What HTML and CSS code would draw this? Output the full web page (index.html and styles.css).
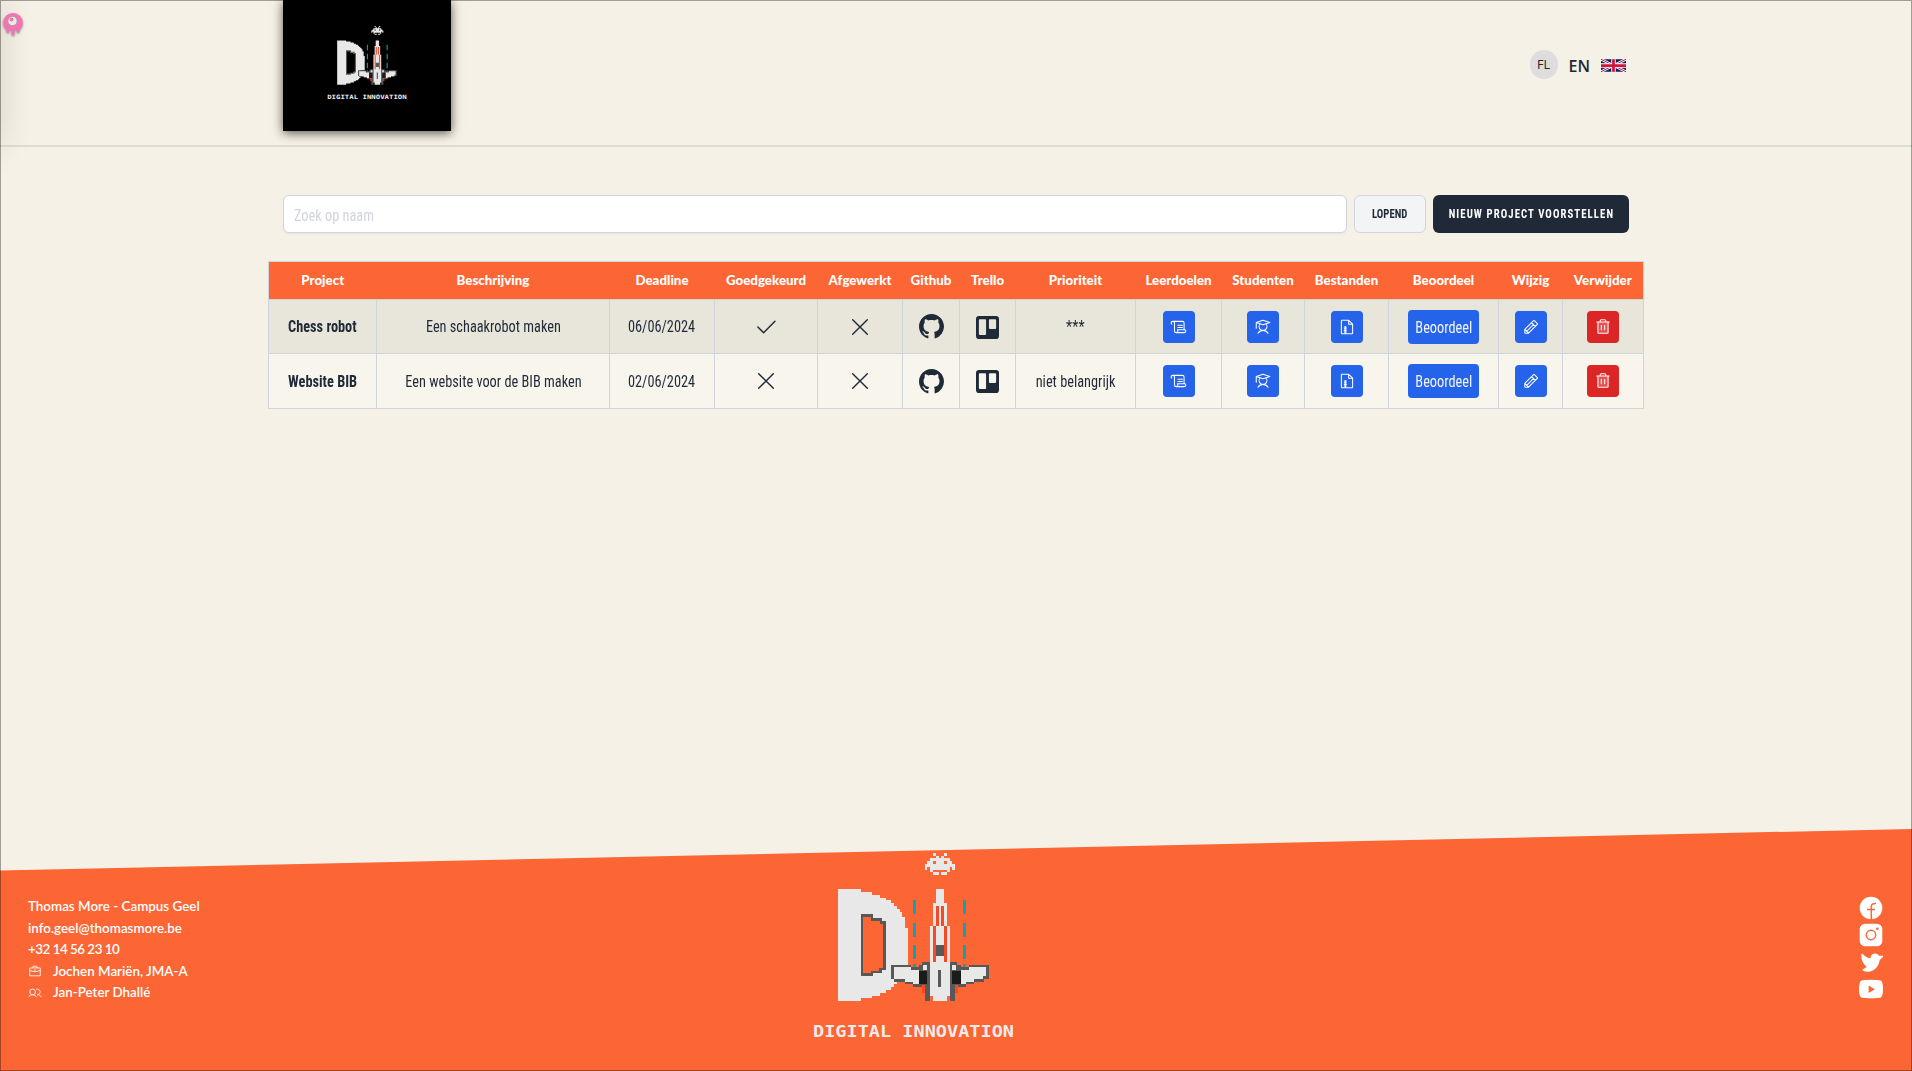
FILE: index.html
```html
<!DOCTYPE html>
<html lang="nl">
<head>
<meta charset="utf-8">
<title>Projecten</title>
<link rel="stylesheet" href="styles.css">
</head>
<body>
<svg class="defs" aria-hidden="true">
  <symbol id="logo" viewBox="0 0 810 690">
    <g>
      <path fill="#e8e8e8" fill-rule="evenodd" d="M175 178H243V186H276V194H301V203H317V211H334V219H342V228H351V236H359V245H367V262H376V295H384V404H351V463H342V472H334V480H317V488H301V497H276V505H243V513H175ZM246 258V433H276V425H300V417H310V404H314V279H300V271H276V258Z"/>
      <path fill="none" stroke="#585858" stroke-width="8" d="M246 257V433H276V426H302V417H313V277H303V268H276V257Z"/>
      <path fill="none" stroke="#0aa5b5" stroke-width="8" d="M404 211V253M404 279V321M404 346V388M404 403V412M554 211V253M554 279V321M554 346V388M554 403V412"/>
      <path fill="#585858" d="M333 404H393V412H417V404H427V396H450V513H434V472H400V463H376V455H342V447H333ZM626 404H566V412H542V404H532V396H509V513H525V472H558V463H583V455H611V447H626Z"/>
      <path fill="#e8e8e8" d="M342 412H392V420H430V404H442V420H417V463H400V455H376V447H342ZM617 412H567V420H529V404H517V420H542V463H558V455H583V447H609V438H617Z"/>
      <path fill="#1b1b1b" d="M417 422H442V463H417ZM517 422H542V463H517Z"/>
      <path fill="#ff4820" d="M426 464H434V488H426ZM525 464H533V488H525Z"/>
      <path fill="#e8e8e8" d="M467 178H492V219H501V287H509V497H501V513H459V497H450V287H459V219H467Z"/>
      <path fill="#f64a24" d="M467 228H476V287H467V396H459V287H467ZM484 228H492V287H501V396H492V287H484Z"/>
      <path fill="#585858" d="M467 346H492V379H467ZM475 421H484V471H475Z"/>
      <path fill="#e8e8e8" fill-rule="evenodd" d="M459 69H467V77H476V85H484V77H492V69H501V77H492V85H509V94H517V102H525V119H517V111H509V127H501V119H459V127H450V111H442V119H434V102H442V94H450V85H467V77H459ZM459 94V102H467V94ZM492 94V102H501V94ZM459 127H476V135H459ZM484 127H501V135H484Z"/>
    </g>
    <text class="logo-text" x="99" y="620" textLength="603" lengthAdjust="spacingAndGlyphs">DIGITAL INNOVATION</text>
  </symbol>
  <symbol id="check" viewBox="0 0 256 256"><path d="M216 72 104 184 48 128"/></symbol>
  <symbol id="x" viewBox="0 0 256 256"><path d="M200 56 56 200M200 200 56 56"/></symbol>
  <symbol id="github" viewBox="0 0 16 16"><path d="M8 0C3.58 0 0 3.58 0 8c0 3.54 2.29 6.53 5.47 7.59.4.07.55-.17.55-.38 0-.19-.01-.82-.01-1.49-2.01.37-2.53-.49-2.69-.94-.09-.23-.48-.94-.82-1.13-.28-.15-.68-.52-.01-.53.63-.01 1.08.58 1.23.82.72 1.21 1.87.87 2.33.66.07-.52.28-.87.51-1.07-1.78-.2-3.64-.89-3.64-3.95 0-.87.31-1.59.82-2.15-.08-.2-.36-1.02.08-2.12 0 0 .67-.21 2.2.82.64-.18 1.32-.27 2-.27s1.36.09 2 .27c1.53-1.04 2.2-.82 2.2-.82.44 1.1.16 1.92.08 2.12.51.56.82 1.27.82 2.15 0 3.07-1.87 3.75-3.65 3.95.29.25.54.73.54 1.48 0 1.07-.01 1.93-.01 2.2 0 .21.15.46.55.38A8.01 8.01 0 0 0 16 8c0-4.42-3.58-8-8-8Z"/></symbol>
  <symbol id="trello" viewBox="0 0 24 24"><path fill-rule="evenodd" d="M3.2 0H20.8A3.2 3.2 0 0 1 24 3.2V20.8A3.2 3.2 0 0 1 20.8 24H3.2A3.2 3.2 0 0 1 0 20.8V3.2A3.2 3.2 0 0 1 3.2 0ZM4 3.4A1 1 0 0 0 3 4.4V18.7A1 1 0 0 0 4 19.7H9.5A1 1 0 0 0 10.500 18.700V4.400A1 1 0 0 0 9.500 3.400ZM14.500 3.400A1 1 0 0 0 13.500 4.400V12.500A1 1 0 0 0 14.500 13.500H20A1 1 0 0 0 21 12.500V4.400A1 1 0 0 0 20 3.400Z"/></symbol>
  <symbol id="scroll" viewBox="0 0 256 256"><path d="M112 104h64M112 136h64M24 88S16 82 16 72a24 24 0 0 1 48 0v112a24 24 0 0 0 24 24h112a24 24 0 0 0 24-24c0-10-8-16-8-16H104s8 6 8 16a24 24 0 0 1-24 24M40 48h136a24 24 0 0 1 24 24v96"/></symbol>
  <symbol id="student" viewBox="0 0 256 256"><path d="M32 64v80M128 32 224 64 128 96 32 64ZM169 82a56 56 0 1 1-82 0M56 216c16-24 41-40 72-40s56 16 72 40"/></symbol>
  <symbol id="zip" viewBox="0 0 256 256"><path d="M200 224H56a8 8 0 0 1-8-8V40a8 8 0 0 1 8-8h96l56 56v128a8 8 0 0 1-8 8ZM152 32v56h56M104 120v104M90 128h28M90 152h28M90 176h28M90 200h28"/></symbol>
  <symbol id="pencil" viewBox="0 0 256 256"><path d="M93 216H48a8 8 0 0 1-8-8v-45L165 38a8 8 0 0 1 11 0l42 42a8 8 0 0 1 0 11ZM136 67l53 53M165 92 68 189M40 163l53 53"/></symbol>
  <symbol id="trash" viewBox="0 0 256 256"><path fill="#fff" fill-opacity=".2" stroke="none" d="M56 56h144v160H56Z"/><path d="M216 56H40M104 104v64M152 104v64M200 56v152a8 8 0 0 1-8 8H64a8 8 0 0 1-8-8V56M168 56V40a16 16 0 0 0-16-16h-48a16 16 0 0 0-16 16v16"/></symbol>
  <symbol id="case" viewBox="0 0 256 256"><path d="M32 72h192v144H32ZM168 72V56a16 16 0 0 0-16-16h-48a16 16 0 0 0-16 16v16M224 118q-96 50-192 0M112 112h32"/></symbol>
  <symbol id="users" viewBox="0 0 256 256"><circle cx="84" cy="108" r="52"/><path d="M10 200a88 88 0 0 1 148 0M150 60a52 52 0 1 1 22 100c31 0 56 15 74 40"/></symbol>
</svg>

<div class="debug-tab">
  <svg class="debug-icon" viewBox="0 0 20 23"><g fill="#f472b6"><path d="M10 0a9.800 9.800 0 0 1 9.800 9.800c0 3-1.300 5.200-3 6.700h-13.600c-1.700-1.500-3-3.700-3-6.700A9.800 9.800 0 0 1 10 0Z"/><rect x="3.500" y="13" width="2.800" height="6.800" rx="1.400"/><rect x="8.500" y="13" width="3" height="9.500" rx="1.500"/><rect x="13.700" y="13" width="2.800" height="6.800" rx="1.400"/></g><circle cx="9.500" cy="8" r="4.700" fill="#eee9de" stroke="#ad9a94"/><circle cx="8.500" cy="6.500" r="2" fill="#f472b6"/></svg>
</div>

<header class="header">
  <div class="brand"><svg class="brand-logo"><use href="#logo"/></svg></div>
  <nav class="user-nav">
    <span class="avatar">FL</span>
    <span class="lang">EN</span>
    <svg class="flag" viewBox="0 0 50 25"><path fill="#012169" d="M0 0h50v25H0z"/><path stroke="#fff" stroke-width="5" d="m0 0 50 25M50 0 0 25"/><path stroke="#d0143a" stroke-width="2" d="m0 0 50 25M50 0 0 25"/><path stroke="#fff" stroke-width="9" d="M25 0v25M0 12.500h50"/><path stroke="#d0143a" stroke-width="5.500" d="M25 0v25M0 12.500h50"/></svg>
  </nav>
</header>

<main class="main">
  <div class="toolbar">
    <div class="search"><span class="cond">Zoek op naam</span></div>
    <div class="btn-light"><span class="cond">LOPEND</span></div>
    <div class="btn-dark"><span class="cond">NIEUW PROJECT VOORSTELLEN</span></div>
  </div>
  <table class="projects">
    <colgroup><col class="c108"><col class="c233"><col class="c105"><col class="c103"><col class="c85"><col class="c57"><col class="c56"><col class="c120"><col class="c86"><col class="c83"><col class="c84"><col class="c110"><col class="c64"><col class="c81"></colgroup>
    <thead><tr><th>Project</th><th>Beschrijving</th><th>Deadline</th><th>Goedgekeurd</th><th>Afgewerkt</th><th>Github</th><th>Trello</th><th>Prioriteit</th><th>Leerdoelen</th><th>Studenten</th><th>Bestanden</th><th>Beoordeel</th><th>Wijzig</th><th>Verwijder</th></tr></thead>
    <tbody>
      <tr>
        <td><b class="cond">Chess robot</b></td><td><span class="cond">Een schaakrobot maken</span></td><td><span class="cond">06/06/2024</span></td>
        <td><svg class="mark"><use href="#check"/></svg></td><td><svg class="mark"><use href="#x"/></svg></td>
        <td><svg class="github"><use href="#github"/></svg></td><td><svg class="trello"><use href="#trello"/></svg></td>
        <td><span class="cond">***</span></td>
        <td><span class="action"><svg><use href="#scroll"/></svg></span></td><td><span class="action"><svg><use href="#student"/></svg></span></td><td><span class="action"><svg><use href="#zip"/></svg></span></td>
        <td><span class="rate"><span class="cond">Beoordeel</span></span></td>
        <td><span class="action"><svg><use href="#pencil"/></svg></span></td><td><span class="action danger"><svg><use href="#trash"/></svg></span></td>
      </tr>
      <tr>
        <td><b class="cond">Website BIB</b></td><td><span class="cond">Een website voor de BIB maken</span></td><td><span class="cond">02/06/2024</span></td>
        <td><svg class="mark"><use href="#x"/></svg></td><td><svg class="mark"><use href="#x"/></svg></td>
        <td><svg class="github"><use href="#github"/></svg></td><td><svg class="trello"><use href="#trello"/></svg></td>
        <td><span class="cond">niet belangrijk</span></td>
        <td><span class="action"><svg><use href="#scroll"/></svg></span></td><td><span class="action"><svg><use href="#student"/></svg></span></td><td><span class="action"><svg><use href="#zip"/></svg></span></td>
        <td><span class="rate"><span class="cond">Beoordeel</span></span></td>
        <td><span class="action"><svg><use href="#pencil"/></svg></span></td><td><span class="action danger"><svg><use href="#trash"/></svg></span></td>
      </tr>
    </tbody>
  </table>
</main>

<footer class="footer">
  <address class="contact">
    <p>Thomas More - Campus Geel</p>
    <p>info.geel@thomasmore.be</p>
    <p class="phone">+32 14 56 23 10</p>
    <p><svg><use href="#case"/></svg>Jochen Mariën, JMA-A</p>
    <p><svg><use href="#users"/></svg>Jan-Peter Dhallé</p>
  </address>
  <svg class="footer-logo"><use href="#logo"/></svg>
  <div class="social">
    <svg viewBox="0 0 24 24"><circle cx="12" cy="12" r="11.300" fill="#fff"/><path fill="none" stroke="#fc6534" stroke-width="1.500" d="M12.300 24V10.500q0-3.300 4.700-3M8 13.500h8"/></svg>
    <svg viewBox="0 0 24 24"><rect x=".7" y=".7" width="22.600" height="22.600" rx="5.500" fill="#fff"/><circle cx="12" cy="12" r="4.700" fill="none" stroke="#fc6534" stroke-width="1.500"/><circle cx="18.300" cy="5.700" r="1.300" fill="#fc6534"/></svg>
    <svg viewBox="0 0 256 256"><path fill="#fff" d="M250 78 220 108c-6 69-65 124-134 124-15 0-27-2-36-7-8-4-11-8-12-9a8 8 0 0 1 4-12c1 0 24-9 39-26-10-7-18-15-26-25C38 131 20 91 26 47a8 8 0 0 1 13-5c1 1 38 38 84 49v-7a48 48 0 0 1 48-48c17 0 32 9 41 24h32a8 8 0 0 1 6 18Z"/></svg>
    <svg viewBox="0 0 24 24"><path fill="#fff" d="M12 2.700q7 0 9.700.8Q24 5 24 12t-2.300 8.500q-2.700.8-9.700.8t-9.700-.8Q0 19 0 12t2.300-8.500Q5 2.700 12 2.700Z"/><path fill="#fc6534" d="m9.600 8.500 6.300 3.700-6.300 3.700z"/></svg>
  </div>
</footer>
<div class="frame"></div>
</body>
</html>
```
FILE: styles.css
```css
* { box-sizing: border-box; }
body {
  margin: 0;
  height: 1071px;
  display: flex;
  flex-direction: column;
  overflow: hidden;
  background: #f6f1e6;
  color: #1f2937;
  font: 16px/24px "Roboto Condensed", Roboto, sans-serif;
}
.defs { position: absolute; width: 0; height: 0; }
.frame { position: absolute; inset: 0; border: 1px solid rgba(0, 0, 0, .35); pointer-events: none; }
.logo-text { font: bold 45px "DejaVu Sans Mono", monospace; fill: #f1ece9; }

.debug-tab { position: absolute; left: -30px; top: 0; width: 30px; height: 145px; box-shadow: 0 0 36px rgba(0, 0, 0, .14); }
.debug-icon { position: absolute; left: 33px; top: 13px; width: 20px; height: 23px; filter: drop-shadow(0 1px 1px rgba(0, 0, 0, .4)); }

.header { height: 147px; flex: none; padding: 0 284px 0 283px; display: flex; justify-content: space-between; align-items: flex-start; border-bottom: 2px solid #deddd1; }
.brand { width: 168px; height: 131px; padding: 17px 0 0 31px; background: #000; box-shadow: 0 2px 10px rgba(0, 0, 0, .65); }
.brand-logo { display: block; width: 107px; height: 91px; }
.user-nav { display: flex; align-items: center; padding-top: 50px; padding-right: 2px; }
.avatar { width: 28px; height: 29px; border-radius: 14px; background: #ddd; color: #222; text-align: center; font: 12.500px/29px "Open Sans", sans-serif; }
.lang { margin: 2px 11px 0 11px; font: 600 16px/24px "Open Sans", sans-serif; }
.flag { width: 25px; height: 13px; margin-top: 1px; }

.main { flex: 1; padding: 48px 268px 0; }
.toolbar { height: 38px; padding: 0 15px; display: flex; gap: 7px; }
.cond { display: inline-block; white-space: nowrap; transform: scaleX(.895); }
.search { flex: 1; border: 1px solid #d1d5db; border-radius: 6px; background: #fff; color: #d1d5db; padding: 8px 10px 6px; box-shadow: 0 1px 2px rgba(0, 0, 0, .06); }
.search .cond { transform-origin: left; }
.btn-light, .btn-dark { display: flex; align-items: center; justify-content: center; border-radius: 6px; font-size: 12px; font-weight: 700; }
.btn-light { width: 72px; background: #f3f4f6; border: 1px solid #d1d5db; }
.btn-dark { width: 196px; background: #1f2937; color: #fff; letter-spacing: 1.200px; }

.projects { width: 1376px; margin-top: 28px; table-layout: fixed; border-collapse: collapse; border: 1px solid #d1d5db; text-align: center; }
.c108 { width: 108px; } .c233 { width: 233px; } .c105 { width: 105px; } .c103 { width: 103px; }
.c85 { width: 85px; } .c57 { width: 57px; } .c56 { width: 56px; } .c120 { width: 120px; }
.c86 { width: 86px; } .c83 { width: 83px; } .c84 { width: 84px; } .c110 { width: 110px; }
.c64 { width: 64px; } .c81 { width: 81px; }
th { height: 38px; padding: 0 0 1px; background: #fc6534; color: #fff; font: 900 13.300px/20px Lato, sans-serif; white-space: nowrap; }
td { height: 55px; padding: 0; border: 1px solid #d1d5db; white-space: nowrap; }
tbody tr { background: #f8f5ed; }
tbody tr:first-child { background: #e8e6da; }
tbody tr:first-child td { height: 54px; }
td > .cond { padding-top: 1px; }
td svg { vertical-align: middle; }
.mark { width: 26px; height: 26px; fill: none; stroke: #1f2937; stroke-width: 14; stroke-linecap: round; stroke-linejoin: round; }
.github { width: 25px; height: 25px; fill: #1f2937; }
.trello { width: 23px; height: 23px; fill: #1f2937; }
.action { display: inline-flex; align-items: center; justify-content: center; width: 32px; height: 32px; border-radius: 4px; background: #2563eb; vertical-align: middle; }
.danger { background: #dc2626; }
.action svg { width: 18px; height: 18px; fill: none; stroke: #fff; stroke-width: 15; stroke-linecap: round; stroke-linejoin: round; }
.rate { display: inline-flex; align-items: center; justify-content: center; width: 71px; height: 34px; padding-top: 2px; border-radius: 4px; background: #2563eb; color: #f3f4f6; vertical-align: middle; }

.footer { height: 242px; flex: none; display: grid; grid-template-columns: 752px 270px 1fr; padding: 1px 29px 0 28px; background: #fc6534; color: #fff; clip-path: polygon(0 41.500px, 100% 0, 100% 100%, 0 100%); }
.contact { padding-top: 66px; font: 600 13.400px/21.500px Lato, sans-serif; }
.contact p { margin: 0; display: flex; align-items: center; }
.contact .phone { letter-spacing: -.5px; }
.contact svg { width: 14px; height: 14px; margin-right: 11px; fill: none; stroke: #fff; stroke-width: 16; }
.footer-logo { width: 270px; height: 230px; shape-rendering: crispEdges; }
.social { justify-self: end; padding-top: 66px; display: flex; flex-direction: column; gap: 3px; }
.social svg { width: 24px; height: 24px; }
```
